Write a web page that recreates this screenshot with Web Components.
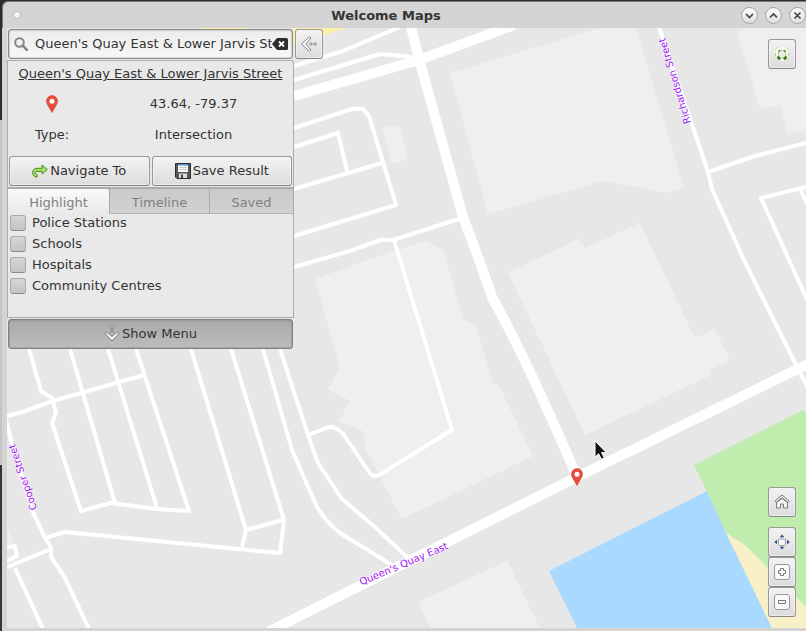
<!DOCTYPE html>
<html lang="en">
<head>
<meta charset="utf-8">
<title>Welcome Maps</title>
<style>
html, body { margin: 0; height: 100%; }
body { font: 13px/20px "DejaVu Sans", sans-serif; color: #333; background: #2f2f33; }
</style>
</head>
<body>
<app-window>
  <span slot="title">Welcome Maps</span>
  <map-canvas></map-canvas>
  <side-panel slot="panel"></side-panel>
  <map-controls slot="controls"></map-controls>
</app-window>

<script>
const BUTTON = `
button { font: inherit; color: inherit; margin: 0; padding: 0; box-sizing: border-box;
  display: flex; align-items: center; justify-content: center; }
.push { height: 30px; border: 1px solid #999; border-bottom-color: #858585; border-radius: 3px;
  background: linear-gradient(#f3f3f3, #dcdcdc); box-shadow: inset 0 0 0 1px #f5f5f5aa; }
svg { display: block; flex: none; }`;

const define = (name, html) => customElements.define(name, class extends HTMLElement {
  constructor() {
    super();
    const t = document.createElement('template');
    t.innerHTML = html;
    this.attachShadow({ mode: 'open' }).append(t.content.cloneNode(true));
  }
});

const PIN = `<path fill="#e74c3c" stroke="#d8402f" stroke-width=".6" d="M6 .5A5.5 5.5 0 0 0 .5 6c0 2 .8 3.400 2 5.500L6 17.500l3.500-6c1.200-2.100 2-3.500 2-5.500A5.500 5.500 0 0 0 6 .5z"/><circle cx="6" cy="6.300" r="2.500" fill="#fff"/>`;

define('app-window', `
<style>
:host { display: grid; grid-template-rows: 27px 1fr 3px; box-sizing: border-box; height: 100vh; min-height: 440px;
  padding: 1px 0 0 2px; background: linear-gradient(#2d2c31 0 120px, #c4c4c4 120px 465px, #34353a 465px); }
header { display: grid; grid-template-columns: 28px 1fr 65px; align-items: center;
  border-top: 1px solid #777; border-left: 1px solid #777; border-top-left-radius: 6px;
  background: #d4d4d4; text-align: center; box-sizing: border-box; }
h1 { font: inherit; font-weight: bold; margin: 0; padding-top: 2px; }
.dot { width: 6px; height: 6px; margin-left: 10px; border-radius: 50%; background: #f6f6f6; border: 1px solid #bbb; }
.win { display: flex; gap: 7px; }
.win button { flex: none; width: 17px; height: 17px; padding: 0; border: 1px solid #a2a2a2; border-radius: 50%;
  background: linear-gradient(#fafafa, #e0e0e0); display: flex; align-items: center; justify-content: center; }
main { display: grid; grid-template-columns: 287px 30px 1fr 38px; overflow: hidden; background: #e7e7e7;
  border-left: 5px solid #d4d4d4; }
main > * { grid-row: 1; min-height: 0; }
.map { grid-column: 1 / -1; display: grid; }
.panel { grid-column: 1 / 3; z-index: 1; align-self: start; }
.controls { grid-column: 4; z-index: 1; }
.controls ::slotted(*) { height: 100%; }
footer { background: #d4d4d4; }
</style>
<header>
  <span class="dot"></span><h1><slot name="title"></slot></h1>
  <div class="win">
    <button type="button" aria-label="Minimise"><svg width="9" height="9"><path d="M1 3l3.500 3.500L8 3" fill="none" stroke="#444" stroke-width="1.600"/></svg></button>
    <button type="button" aria-label="Maximise"><svg width="9" height="9"><path d="M1 6.500L4.500 3 8 6.500" fill="none" stroke="#444" stroke-width="1.600"/></svg></button>
    <button type="button" aria-label="Close"><svg width="9" height="9"><path d="M1.500 1.500l6 6m0-6l-6 6" fill="none" stroke="#444" stroke-width="1.600"/></svg></button>
  </div>
</header>
<main>
  <div class="map"><slot></slot></div>
  <div class="panel"><slot name="panel"></slot></div>
  <div class="controls"><slot name="controls"></slot></div>
</main>
<footer></footer>`);

define('map-canvas', `
<style>
:host { display: block; overflow: hidden; }
svg { display: block; width: 100%; height: 100%; }
.block { fill: #efefef; }
.road { fill: none; stroke: #fff; stroke-width: 4; stroke-linejoin: round; }
.main { stroke-width: 10; }
text { font-family: "DejaVu Sans", sans-serif; font-size: 10px; fill: #a020f0; text-anchor: middle; stroke: #fff; stroke-width: 1px; paint-order: stroke; }
</style>
<svg role="img" aria-label="Map"><g transform="translate(-7 -28)">
  <g class="block">
    <path d="M450 73L600 28H636L684 188 668 193 603 181 488 214z"/>
    <path d="M737 32L750 28H2000V100L806 130 787 135 781 105 760 109z"/>
    <path d="M382 128l10-3 6 1 3 4 7 29-16 5z"/>
    <path d="M315 279L393 251 426 241 443 249 463 319 475 325 494 385 498 384 533 456 402 519 365 448 363 431 339 421 350 401 328 389 340 368z"/>
    <path d="M508 273L578 239 585 248 640 223 695 338 715 329 730 360 709 370 711 375 585 435z"/>
    <path d="M418 602L507 561 540 628H431z"/>
    <path d="M7 525l6 17-6 2z"/>
  </g>
  <path fill="#ffefa8" d="M200 28H247L240 31H200zM293 28H346L322 36 293 45z"/>
  <path fill="#aad9ff" d="M549 571L707 491 772 628H577z"/>
  <path fill="#c0ecae" d="M694 465L803 410 1200 800 806 607 745 545 726 533 707 491z"/>
  <path fill="#f8f0c6" d="M726 533L745 545 806 607V628H772z"/>
  <g class="road">
    <path d="M29 349L41 391 52 398 56 413 52 423 81 511 111 503 157 509 189 511 136 349"/>
    <path d="M70 349L115 503M108 349L157 508M7 416L22 412 53 401 144 375"/>
    <path d="M6 420L11 440 32 510 45 538 51 547V557L64 576 89 629M5 568L51 549M15 568L43 629"/>
    <path d="M45 538L65 532 280 553 284 520 231 349M191 349L246 530 242 547M246 530L283 520M7 547L15 546 17 556 7 561"/>
    <path d="M263 349L292 450 316 505C325 520 331 526 340 533L392 565M280 349L308 435 318 463 342 499 375 527 410 560"/>
    <path d="M308 435L326 428Q335 424 344 435L369 472Q373 478 379 475L452 430 394 240"/>
    <path d="M294 66L343 51 400 27M294 80L380 54 412 57M294 128L352 109H363L369 116 396 205 294 236M294 147L338 133 347 171M294 189L382 163"/>
    <path d="M294 267L350 251 380 240H393L462 218M659 27L708 172 712 189 744 260 795 363 809 390M708 172L755 156 806 143M806 187L761 198 790 262 809 304M800 189L809 208"/>
    <path class="main" d="M411 27L419 59 463 217 481 265 492 297C516 340 544 400 577 477M294 96L419 60 514 25M266 633L577 477 806 365 1200 170"/>
  </g>
  <text transform="translate(405 567) rotate(-23)">Queen's Quay East</text>
  <text transform="translate(678 80) rotate(-107)">Richardson Street</text>
  <text transform="translate(26 476) rotate(-109)">Cooper Street</text>
  <g transform="translate(571 468)">${PIN}</g>
  <path d="M595 441v16l3.700-3.200 2.600 5.400 2.900-1.400-2.600-5.200h4.700z" fill="#111" stroke="#fff"/>
</g></svg>`);

define('search-field', `
<style>${BUTTON}
:host { display: grid; grid-template-columns: 285px 28px; gap: 2px; }
.field { box-sizing: border-box; height: 30px; display: grid; grid-template-columns: 21px 1fr 16px; align-items: center;
  padding: 0 4px 0 5px; border: 1px solid #8a8a8a; border-radius: 3px;
  background: linear-gradient(#ececec, #f8f8f8); box-shadow: inset 0 0 2px #888; }
input { font: inherit; color: inherit; border: 0; padding: 0; width: 100%; min-width: 0; background: none; outline: 0; height: 20px; }
.clear { border: 0; background: none; }
</style>
<div class="field">
  <svg width="14" height="14" fill="none" stroke="#858585"><circle cx="5.500" cy="5.500" r="4.300" stroke-width="2"/><path d="M8.700 8.700l4.300 4.300" stroke-width="2.500" stroke-linecap="round"/></svg>
  <input type="text" aria-label="Search" value="Queen's Quay East &amp; Lower Jarvis Street">
  <button class="clear" type="button" aria-label="Clear"><svg width="16" height="12"><path d="M0 6L5 0h9.500q1.500 0 1.500 1.500v9q0 1.500-1.500 1.500H5z" fill="#2e2e2e"/><path d="M7 3.500l5 5m0-5l-5 5" stroke="#fff" stroke-width="1.800"/></svg></button>
</div>
<button class="push" type="button" aria-label="Hide panel"><svg width="18" height="18" fill="#f7f7f7" stroke="#858585"><path d="M9.500 1.500l1.500 1.500-5 6 5 6-1.500 1.500L1.500 9z"/><circle cx="11" cy="9" r="1.200"/><circle cx="15.200" cy="9" r="1.200"/></svg></button>`);

define('place-card', `
<style>${BUTTON}
:host { display: block; border: 1px solid #ababab; border-bottom-width: 2px; border-top-right-radius: 3px; background: #e9e9e9; padding: 3px 1px 1px; }
a { display: block; color: inherit; text-align: center; text-decoration: underline; }
dl { display: grid; grid-template-columns: 86px 1fr; grid-template-rows: 31px 31px; align-items: center; justify-items: center; margin: 4px 0 6px; }
dt, dd { margin: 0; }
.actions { display: grid; grid-template-columns: 1fr 1fr; gap: 2px; }
.actions button { gap: 2px; }
</style>
<a href="#place">Queen's Quay East &amp; Lower Jarvis Street</a>
<dl>
  <dt><svg width="12" height="18" role="img" aria-label="Location">${PIN}</svg></dt><dd>43.64, -79.37</dd>
  <dt>Type:</dt><dd>Intersection</dd>
</dl>
<div class="actions">
  <button class="push" type="button"><svg width="16" height="14"><path d="M10 1l5.300 4.500L10 10V7.400H5C2.600 7.400 2.600 10.500 5 10.500v2.600C-.8 13.100-.8 4.300 5 4.300h5z" fill="#a8e070" stroke="#3f8f12"/></svg>Navigate To</button>
  <button class="push" type="button"><svg width="16" height="16"><path d="M.5.500h15v15H2L.5 14z" fill="#55585a" stroke="#2a2c2d"/><path d="M3 1h10v8H3z" fill="#f8f8f8"/><path d="M3 1h10v1.500H3z" fill="#4f8fd0"/><path d="M4 4.500h8M4 6.500h8" stroke="#ccc"/><path d="M4 10.500h8V15H4z" fill="#ddd"/><path d="M6 11.500h2V15H6z" fill="#444"/></svg>Save Result</button>
</div>`);

define('tab-strip', `
<style>${BUTTON}
:host { display: grid; grid-template-columns: 101px 100px 1fr; height: 24px; background: #c9c9c9; }
button { border: 0; border-left: 1px solid #aaa; border-bottom: 1px solid #b5b5b5; background: linear-gradient(#cacaca, #d2d2d2); color: #808080; padding-top: 4px; }
button[aria-selected=true] { border: 0; padding-bottom: 1px; background: linear-gradient(#fafafa, #e9e9e9); border-top-right-radius: 3px; }
</style>
<button type="button" role="tab" aria-selected="true">Highlight</button><button type="button" role="tab" aria-selected="false">Timeline</button><button type="button" role="tab" aria-selected="false">Saved</button>`);

define('check-item', `
<style>
:host { display: block; }
label { display: flex; align-items: center; gap: 6px; height: 21px; }
input { appearance: none; margin: 0; width: 16px; height: 16px; box-sizing: border-box; border: 1px solid #aaa; border-bottom-color: #8c8c8c; border-radius: 3px; background: linear-gradient(#d6d6d6, #c4c4c4); }
input:checked { background: #888; }
</style>
<label><input type="checkbox"><slot></slot></label>`);

define('side-panel', `
<style>${BUTTON}
:host { display: block; padding-top: 1px; }
search-field { margin-left: 1px; }
place-card { margin-top: 1px; margin-right: 30px; }
section { height: 128px; margin-right: 30px; border: 1px solid #ababab; border-top: 0; background: #e9e9e9; }
tab-strip { height: 23px; }
.list { padding: 0 2px; }
.menu { width: 285px; height: 30px; margin: 1px 0 0 1px; border: 1px solid #7e7e7e; border-radius: 3px; gap: 2px;
  background: linear-gradient(#a9a9a9, #bdbdbd); box-shadow: inset 0 0 2px #777; }
</style>
<search-field></search-field>
<place-card></place-card>
<section>
  <tab-strip role="tablist"></tab-strip>
  <div class="list">
    <check-item>Police Stations</check-item>
    <check-item>Schools</check-item>
    <check-item>Hospitals</check-item>
    <check-item>Community Centres</check-item>
  </div>
</section>
<button class="menu" type="button"><svg width="16" height="16" fill="#f5f5f5" stroke="#777"><path d="M1 7.500L2.800 6 8 10.500 13.200 6 15 7.500 8 15z"/><circle cx="8" cy="5" r="1.100"/><circle cx="8" cy="1.600" r="1.100"/></svg>Show Menu</button>`);

define('map-controls', `
<style>${BUTTON}
:host { display: flex; flex-direction: column; box-sizing: border-box; padding: 11px 10px 11px 0; }
.push { width: 28px; flex: none; }
.home { margin: auto 0 10px; }
</style>
<button class="push" type="button" aria-label="Help"><svg width="16" height="16" fill="none"><path d="M1 4l3-2.500M15 4l-3-2.500M1 12l2 2.500M15 12l-2 2.500" stroke="#ecd3b4" stroke-width="1.500"/><circle cx="8" cy="8" r="5" stroke="#fbfdf8" stroke-width="4"/><circle cx="8" cy="8" r="4" stroke="#a9cf88"/><path d="M3.500 10.500l2.500 3M12.500 10.500l-2.500 3" stroke="#3a6f1c" stroke-width="2.500"/><path d="M4.500 6l1.500-2M11.500 6l-1.500-2" stroke="#5a8a3c" stroke-width="1.500"/><path d="M1.500 7v3M14.500 7v3" stroke="#a8d67c"/></svg></button>
<button class="push home" type="button" aria-label="Home"><svg width="16" height="16" fill="#f7f7f7" stroke="#777"><path d="M2.500 8.500L8 4.500l5.500 4v5.500h-4v-4h-3v4h-4z"/><path d="M.7 7.200L8 1l7.300 6.200-1.200 1.300L8 3.700 1.900 8.500z"/></svg></button>
<button class="push" type="button" aria-label="Fit to view"><svg width="16" height="16"><rect x="4.500" y="5" width="7" height="6.500" rx="1" fill="#f6f6f6" stroke="#999"/><path d="M8 .5l2.200 2.700H5.800zM8 15.500l2.200-2.700H5.800zM.3 8l2.700-2.200v4.400zM15.700 8L13 5.800v4.400z" fill="#204a87"/></svg></button>
<button class="push" type="button" aria-label="Zoom in"><svg width="16" height="16" fill="#fafafa"><rect x=".5" y=".5" width="15" height="15" rx="2.500" stroke="#999"/><path d="M6.500 4.500h3v2h2v3h-2v2h-3v-2h-2v-3h2z" stroke="#777"/></svg></button>
<button class="push" type="button" aria-label="Zoom out"><svg width="16" height="16" fill="#fafafa"><rect x=".5" y=".5" width="15" height="15" rx="2.500" stroke="#999"/><path d="M4.500 6.500h7v3h-7z" stroke="#777"/></svg></button>`);
</script>
</body>
</html>
